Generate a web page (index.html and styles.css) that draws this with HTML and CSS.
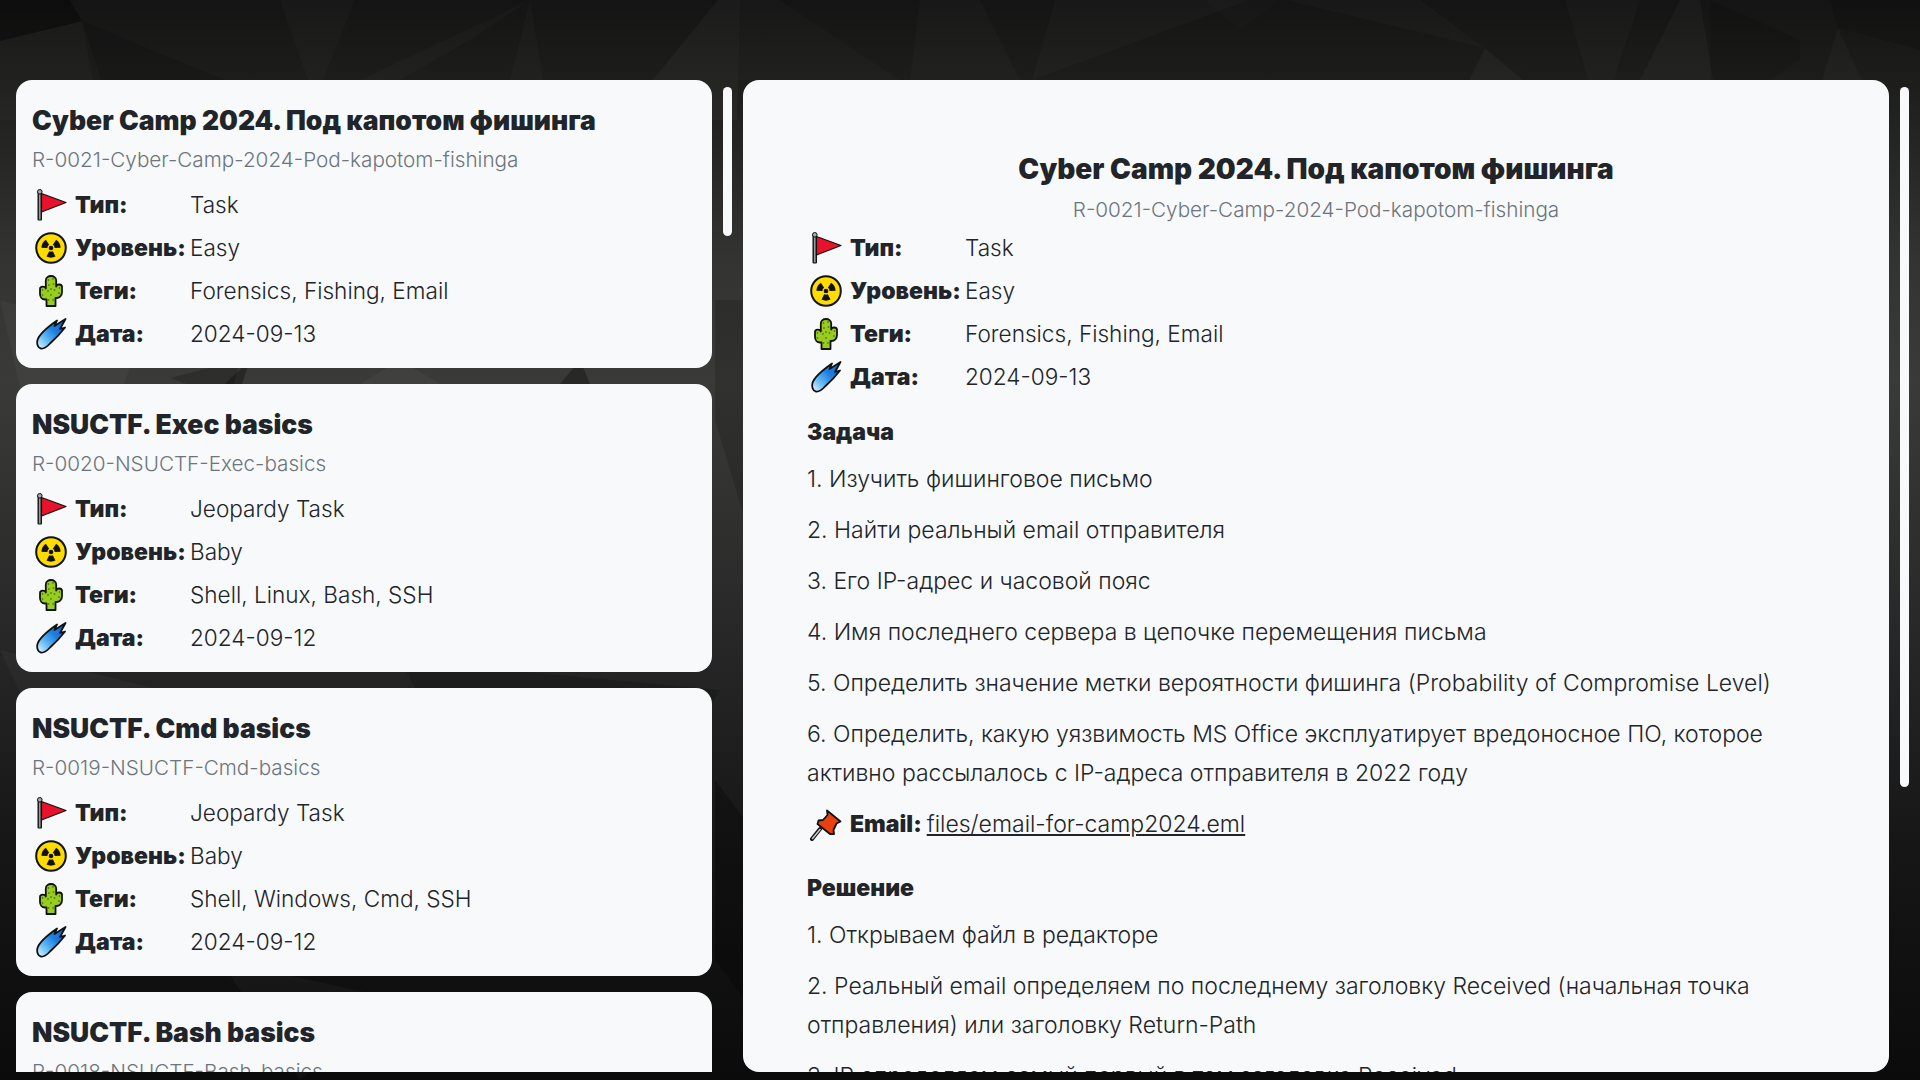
FILE: index.html
```html
<!DOCTYPE html>
<html lang="ru">
    <head>
        <meta charset="UTF-8">
        <meta name="viewport" content="width=device-width, initial-scale=1.0">
        <title>Cyber Camp 2024</title>
        <link rel="stylesheet" href="styles.css">
    </head>

    <body>
        <!-- background polygons -->
        <svg class="bg-shapes" viewBox="0 0 1920 1080" preserveAspectRatio="none" aria-hidden="true">
            <polygon points="0,0 70,0 82,21 0,41" fill="#000" opacity=".3"/>
            <polygon points="0,41 82,21 100,120 0,120" fill="#fff" opacity=".02"/>
            <polygon points="82,21 225,80 340,140 120,140" fill="#000" opacity=".12"/>
            <polygon points="280,0 355,0 315,100" fill="#fff" opacity=".018"/>
            <polygon points="360,80 530,0 470,40 400,80" fill="#fff" opacity=".018"/>
            <polygon points="530,0 500,120 550,120" fill="#fff" opacity=".02"/>
            <polygon points="718,0 740,0 737,120 620,120" fill="#fff" opacity=".03"/>
            <polygon points="740,0 780,0 900,80 737,80" fill="#fff" opacity=".015"/>
            <polygon points="920,0 980,0 1040,120 905,120" fill="#fff" opacity=".018"/>
            <polygon points="1055,0 1250,0 1032,80" fill="#fff" opacity=".018"/>
            <polygon points="1205,0 1280,0 1240,30" fill="#fff" opacity=".012"/>
            <polygon points="1285,0 1420,0 1485,48" fill="#fff" opacity=".018"/>
            <polygon points="1485,48 1450,120 1570,120" fill="#fff" opacity=".03"/>
            <polygon points="1565,0 1640,0 1600,120" fill="#fff" opacity=".018"/>
            <polygon points="1680,0 1700,0 1720,120 1620,120" fill="#fff" opacity=".028"/>
            <polygon points="1710,0 1800,40 1800,60 1710,120" fill="#000" opacity=".1"/>
            <polygon points="1838,28 1810,120 1880,120" fill="#fff" opacity=".025"/>
            <polygon points="1838,28 1920,50 1920,0 1830,0" fill="#000" opacity=".12"/>
            <polygon points="0,300 140,340 60,560" fill="#fff" opacity=".03"/>
            <polygon points="170,378 240,360 230,400" fill="#000" opacity=".2"/>
            <polygon points="225,384 250,360 240,390" fill="#000" opacity=".3"/>
            <polygon points="360,384 400,360 440,384" fill="#fff" opacity=".03"/>
            <polygon points="560,384 580,360 590,384" fill="#000" opacity=".3"/>
            <polygon points="715,300 745,300 745,520 715,420" fill="#000" opacity=".15"/>
            <polygon points="0,650 200,700 120,900" fill="#fff" opacity=".03"/>
            <polygon points="400,660 720,690 560,960" fill="#000" opacity=".15"/>
            <polygon points="220,960 400,1000 300,1080" fill="#fff" opacity=".03"/>
            <polygon points="715,780 745,820 745,1000 715,960" fill="#000" opacity=".25"/>
        </svg>

        <!-- emoji set -->
        <svg class="icon-defs" aria-hidden="true">
            <defs>
                <linearGradient id="comet-fill" x1="0" y1="1" x2="1" y2="0">
                    <stop offset="0" stop-color="#f0faff"/>
                    <stop offset=".28" stop-color="#6cc0f5"/>
                    <stop offset=".6" stop-color="#1c7fe0"/>
                    <stop offset="1" stop-color="#1560c4"/>
                </linearGradient>
            </defs>
            <symbol id="i-flag" viewBox="0 0 32 32">
                <rect x="2.500" y="2" width="4.500" height="29.500" rx="1" fill="#111"/>
                <rect x="3.900" y="3" width="1.700" height="27.500" fill="#9a9a9a"/>
                <circle cx="4.800" cy="2.800" r="2.300" fill="#aaa" stroke="#111" stroke-width="1"/>
                <path d="M6.500 4.500 L31 13.500 L6.500 23 Z" fill="#e8132b" stroke="#111" stroke-width="1.200" stroke-linejoin="round"/>
            </symbol>
            <symbol id="i-radio" viewBox="0 0 32 32">
                <circle cx="16" cy="16" r="14.800" fill="#ffdc00" stroke="#111" stroke-width="2"/>
                <circle cx="16" cy="16" r="2.300" fill="#111"/>
                <path d="M11.500 7.500 A10 10 0 0 1 20.500 7.500 L17.800 12.800 A4 4 0 0 0 14.200 12.800 Z" fill="#111" transform="rotate(-60 16 16)"/>
                <path d="M11.500 7.500 A10 10 0 0 1 20.500 7.500 L17.800 12.800 A4 4 0 0 0 14.200 12.800 Z" fill="#111" transform="rotate(60 16 16)"/>
                <path d="M11.500 7.500 A10 10 0 0 1 20.500 7.500 L17.800 12.800 A4 4 0 0 0 14.200 12.800 Z" fill="#111" transform="rotate(180 16 16)"/>
            </symbol>
            <symbol id="i-cactus" viewBox="0 0 32 32">
                <path d="M11.500 31 V24.500 H10 C7 24.500 5 22 5 19 V14 C5 11 10 11 10.800 13.500 V5.500 C10.800 -0.500 21.200 -0.500 21.200 5.500 V11.500 C22 8.500 27 9 27 12 V17 C27 20.500 24.500 23 21.500 23 H20.500 V31 Z" fill="#9acb1f" stroke="#111" stroke-width="1.800" stroke-linejoin="round"/>
                <g fill="#3f8a12">
                    <circle cx="13.500" cy="5" r=".9"/><circle cx="18" cy="4" r=".9"/><circle cx="14" cy="10" r=".9"/><circle cx="18.500" cy="9" r=".9"/>
                    <circle cx="16" cy="14" r=".9"/><circle cx="19.500" cy="15" r=".9"/><circle cx="13" cy="16" r=".9"/><circle cx="7.500" cy="15" r=".9"/>
                    <circle cx="24.500" cy="13" r=".9"/><circle cx="7.500" cy="20" r=".9"/><circle cx="24" cy="18" r=".9"/><circle cx="16" cy="20" r=".9"/>
                    <circle cx="13.500" cy="25" r=".9"/><circle cx="18" cy="25" r=".9"/>
                </g>
            </symbol>
            <symbol id="i-comet" viewBox="0 0 32 32">
                <path d="M2.500 22 C4 17 12 9.500 22 2.500 L19.500 8 L30.500 1 L25 11 L30 9.500 C25.500 15.500 19.500 21.500 15 25.500 C11.500 29.500 8.500 30.800 6 30.500 C3 30 1.500 26 2.500 22 Z" fill="url(#comet-fill)" stroke="#111" stroke-width="1.800" stroke-linejoin="round"/>
            </symbol>
            <symbol id="i-pin" viewBox="0 0 32 32">
                <path d="M2 30 L10 20" stroke="#111" stroke-width="4" stroke-linecap="round"/>
                <path d="M2.500 29.500 L10 20.500" stroke="#c9c9c9" stroke-width="1.600" stroke-linecap="round"/>
                <path d="M17 1.500 L30.500 12.500 L26.500 14.500 L23.500 21 L24 25 L20 25 L7.500 15 L8.500 11.500 L13 11 L17.500 6 Z" fill="#e8400f" stroke="#111" stroke-width="1.800" stroke-linejoin="round"/>
            </symbol>
        </svg>

        <div class="page">
            <div class="side-list">
                <article class="card">
                    <h2 class="card-title">Cyber Camp 2024. Под капотом фишинга</h2>
                    <p class="slug">R-0021-Cyber-Camp-2024-Pod-kapotom-fishinga</p>
                    <ul class="meta">
                        <li><svg class="icon"><use href="#i-flag"/></svg><b>Тип:</b><span>Task</span></li>
                        <li><svg class="icon"><use href="#i-radio"/></svg><b>Уровень:</b><span>Easy</span></li>
                        <li><svg class="icon"><use href="#i-cactus"/></svg><b>Теги:</b><span>Forensics, Fishing, Email</span></li>
                        <li><svg class="icon"><use href="#i-comet"/></svg><b>Дата:</b><span>2024-09-13</span></li>
                    </ul>
                </article>
                <article class="card">
                    <h2 class="card-title">NSUCTF. Exec basics</h2>
                    <p class="slug">R-0020-NSUCTF-Exec-basics</p>
                    <ul class="meta">
                        <li><svg class="icon"><use href="#i-flag"/></svg><b>Тип:</b><span>Jeopardy Task</span></li>
                        <li><svg class="icon"><use href="#i-radio"/></svg><b>Уровень:</b><span>Baby</span></li>
                        <li><svg class="icon"><use href="#i-cactus"/></svg><b>Теги:</b><span>Shell, Linux, Bash, SSH</span></li>
                        <li><svg class="icon"><use href="#i-comet"/></svg><b>Дата:</b><span>2024-09-12</span></li>
                    </ul>
                </article>
                <article class="card">
                    <h2 class="card-title">NSUCTF. Cmd basics</h2>
                    <p class="slug">R-0019-NSUCTF-Cmd-basics</p>
                    <ul class="meta">
                        <li><svg class="icon"><use href="#i-flag"/></svg><b>Тип:</b><span>Jeopardy Task</span></li>
                        <li><svg class="icon"><use href="#i-radio"/></svg><b>Уровень:</b><span>Baby</span></li>
                        <li><svg class="icon"><use href="#i-cactus"/></svg><b>Теги:</b><span>Shell, Windows, Cmd, SSH</span></li>
                        <li><svg class="icon"><use href="#i-comet"/></svg><b>Дата:</b><span>2024-09-12</span></li>
                    </ul>
                </article>
                <article class="card">
                    <h2 class="card-title">NSUCTF. Bash basics</h2>
                    <p class="slug">R-0018-NSUCTF-Bash-basics</p>
                </article>
            </div>
            <div class="thumb thumb-list"></div>

            <main class="detail">
                <h1 class="detail-title">Cyber Camp 2024. Под капотом фишинга</h1>
                <p class="slug detail-slug">R-0021-Cyber-Camp-2024-Pod-kapotom-fishinga</p>
                <ul class="meta detail-meta">
                    <li><svg class="icon"><use href="#i-flag"/></svg><b>Тип:</b><span>Task</span></li>
                    <li><svg class="icon"><use href="#i-radio"/></svg><b>Уровень:</b><span>Easy</span></li>
                    <li><svg class="icon"><use href="#i-cactus"/></svg><b>Теги:</b><span>Forensics, Fishing, Email</span></li>
                    <li><svg class="icon"><use href="#i-comet"/></svg><b>Дата:</b><span>2024-09-13</span></li>
                </ul>

                <h3 class="section">Задача</h3>
                <p>1. Изучить фишинговое письмо</p>
                <p>2. Найти реальный email отправителя</p>
                <p>3. Его IP-адрес и часовой пояс</p>
                <p>4. Имя последнего сервера в цепочке перемещения письма</p>
                <p>5. Определить значение метки вероятности фишинга (Probability of Compromise Level)</p>
                <p>6. Определить, какую уязвимость MS Office эксплуатирует вредоносное ПО, которое активно рассылалось с IP-адреса отправителя в 2022 году</p>
                <p class="attach"><svg class="icon"><use href="#i-pin"/></svg><b>Email:</b> <a href="#">files/email-for-camp2024.eml</a></p>

                <h3 class="section section-next">Решение</h3>
                <p>1. Открываем файл в редакторе</p>
                <p>2. Реальный email определяем по последнему заголовку Received (начальная точка отправления) или заголовку Return-Path</p>
                <p>3. IP определяем самый первый в том заголовке Received</p>
            </main>
            <div class="thumb thumb-detail"></div>
        </div>
    </body>
</html>
```

FILE: styles.css
```css
*{
    box-sizing: border-box;
}
html, body{
    height: 100%;
}
body{
    margin: 0;
    overflow: hidden;
    background: linear-gradient(to bottom, #141414 0, #1d1d1c 80px, #333331 260px, #3a3a38 380px, #2a2a2a 600px, #161616 850px, #0b0b0b 1080px);
    color: #212529;
    font-family: Inter, "Noto Sans", sans-serif;
    font-weight: 300;
    font-size: 22.6px;
}
.bg-shapes{
    position: absolute;
    inset: 0;
    width: 100%;
    height: 100%;
}
.icon-defs{
    position: absolute;
    width: 0;
    height: 0;
}
.page{
    position: relative;
    height: 992px;
    margin-top: 80px;
    padding-left: 16px;
    display: flex;
    overflow: hidden;
}
.side-list{
    width: 696px;
    flex: none;
    display: flex;
    flex-direction: column;
    gap: 16px;
}
.card{
    flex: none;
    min-height: 288px;
    padding: 24px 16px 13px;
    background: #f8f9fa;
    border-radius: 16px;
}
.card-title{
    margin: 0;
    font-size: 26.5px;
    line-height: 32px;
    font-weight: 900;
}
.slug{
    margin: 12px 0 0;
    line-height: 24px;
    font-size: 20.7px;
    color: #6c757d;
}
.meta{
    margin: 11px 0 0;
    padding: 0 0 0 3px;
    list-style: none;
}
.meta li{
    display: flex;
    align-items: center;
    height: 43px;
}
.meta b{
    width: 115px;
    flex: none;
    font-size: 23px;
    font-weight: 900;
    white-space: nowrap;
}
.icon{
    width: 32px;
    height: 32px;
    flex: none;
    margin-right: 8px;
}
.thumb{
    flex: none;
    width: 9px;
    background: #f8f9fa;
    border-radius: 5px;
    margin-top: 7px;
}
.thumb-list{
    height: 149px;
    margin-left: 11px;
    margin-right: 11px;
}
.thumb-detail{
    height: 700px;
    margin-left: 11px;
}
.detail{
    width: 1146px;
    flex: none;
    padding: 72px 64px 0;
    background: #f8f9fa;
    border-radius: 16px;
    overflow: hidden;
}
.detail p{
    margin: 12px 0 0;
    line-height: 39px;
    font-size: 23px;
}
.detail-title{
    margin: 0;
    text-align: center;
    font-size: 28px;
    line-height: 34px;
    font-weight: 900;
}
.detail .detail-slug{
    margin-top: 12px;
    font-size: 20.7px;
    line-height: 24px;
    text-align: center;
}
.detail-meta{
    margin-top: 4px;
}
.section{
    margin: 19px 0 13px;
    font-size: 23px;
    line-height: 30px;
    font-weight: 900;
}
.section-next{
    margin-top: 29px;
}
.attach{
    display: flex;
    align-items: center;
    padding-left: 3px;
}
.attach b{
    font-weight: 900;
    margin-right: 5px;
}
.attach a{
    color: inherit;
}
```
